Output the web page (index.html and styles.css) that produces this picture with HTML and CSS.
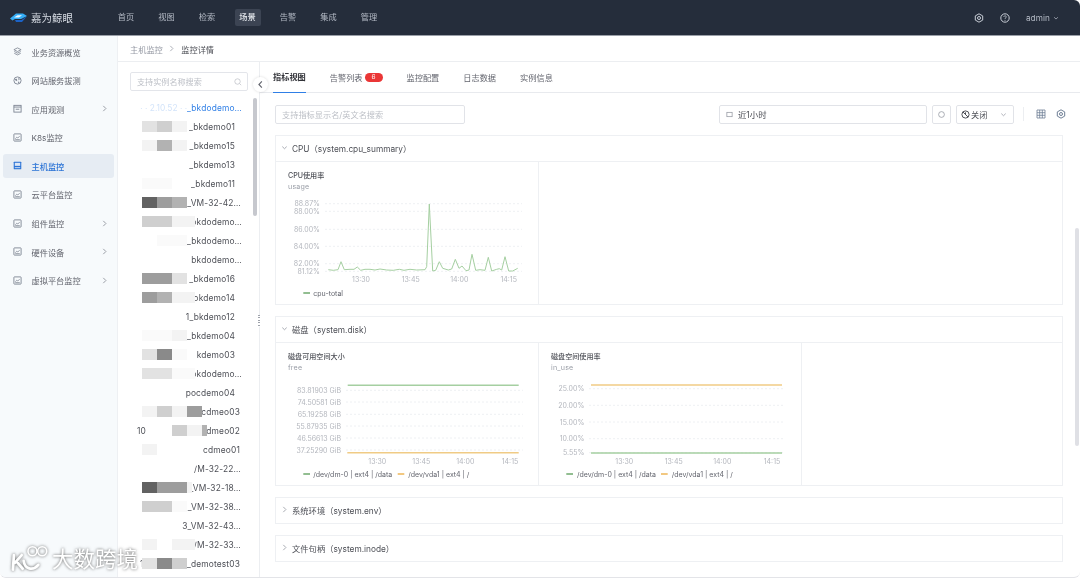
FILE: index.html
```html
<!DOCTYPE html>
<html lang="zh-CN">
<head>
<meta charset="utf-8">
<title>监控详情</title>
<link rel="stylesheet" href="styles.css">
</head>
<body>
<svg class="defs" width="0" height="0" aria-hidden="true">
  <symbol id="i-box" viewBox="0 0 10 10"><rect x="1" y="1" width="8" height="8" rx=".6" fill="none" stroke="currentColor"/><path d="M2.6 6.4 4.2 4.6 5.4 5.6 7.4 3.4" fill="none" stroke="currentColor" stroke-width=".8"/><path d="M2.5 7.4h5" stroke="currentColor" stroke-width=".9"/></symbol>
  <symbol id="i-gear" viewBox="0 0 10 10"><path d="M5 .8 8.7 2.9v4.2L5 9.2 1.3 7.1V2.9Z" fill="none" stroke="currentColor"/><circle cx="5" cy="5" r="1.5" fill="none" stroke="currentColor"/></symbol>
  <symbol id="i-down" viewBox="0 0 8 8"><path d="M1.5 3 4 5.4 6.5 3" fill="none" stroke="currentColor"/></symbol>
  <symbol id="i-right" viewBox="0 0 8 8"><path d="M2.6 1 5.6 4 2.6 7" fill="none" stroke="currentColor"/></symbol>
</svg>
<div class="app">
  <header class="top">
    <div class="brand">
      <svg class="logo" viewBox="0 0 17 10"><path d="M0 5.5 6 .5H13L17 3 11 6H5L2.5 7.5Z" fill="#35aef7"/><path d="M5 7H11.5L17 3.2 12 9H6Z" fill="#1b62c6"/><path d="M4 4.6 7.5 2.2H12L9 4.6Z" fill="#eaf6ff"/></svg>
      <span class="brand-name">嘉为鲸眼</span>
    </div>
    <nav class="nav">
      <a class="nav-item">首页</a><a class="nav-item">视图</a><a class="nav-item">检索</a><a class="nav-item on">场景</a><a class="nav-item">告警</a><a class="nav-item">集成</a><a class="nav-item">管理</a>
    </nav>
    <div class="top-right">
      <svg class="top-ic"><use href="#i-gear"/></svg>
      <svg class="top-ic" viewBox="0 0 10 10"><circle cx="5" cy="5" r="4.2" fill="none" stroke="currentColor"/><path d="M3.8 4c0-1.6 2.5-1.6 2.5-.1 0 1-1.3 1-1.3 2" fill="none" stroke="currentColor" stroke-width=".8"/><circle cx="5" cy="7.2" r=".5" fill="currentColor"/></svg>
      <span class="user">admin<svg class="user-caret"><use href="#i-down"/></svg></span>
    </div>
  </header>
  <div class="body">
    <aside class="side">
      <a class="side-item"><svg class="side-ic" viewBox="0 0 10 10"><path d="M5 1 9 3 5 5 1 3Z M1.4 5 5 6.8 8.6 5 M1.4 7 5 8.8 8.6 7" fill="none" stroke="currentColor" stroke-width=".9"/></svg>业务资源概览</a>
      <a class="side-item"><svg class="side-ic" viewBox="0 0 10 10"><circle cx="5" cy="5" r="4" fill="none" stroke="currentColor"/><path d="M2 3.4 4 3l.8 1.6-1.4 1.2ZM6 1.8l1.6 1.6L6.2 5ZM5.4 6.2l2 .4L6 8.4Z" fill="currentColor"/></svg>网站服务拔测</a>
      <a class="side-item"><svg class="side-ic" viewBox="0 0 10 10"><rect x="1" y="1.5" width="8" height="7.5" fill="none" stroke="currentColor"/><path d="M1 3.4h8M3 5.8h4" stroke="currentColor"/></svg>应用观测<svg class="side-arrow"><use href="#i-right"/></svg></a>
      <a class="side-item"><svg class="side-ic"><use href="#i-box"/></svg>K8s监控</a>
      <a class="side-item on"><svg class="side-ic" viewBox="0 0 10 10"><rect x=".8" y=".8" width="8.4" height="8.4" rx=".6" fill="currentColor"/><rect x="2" y="2" width="6" height="3.4" fill="#dbe6f5"/><path d="M2 7.4h6" stroke="#dbe6f5"/></svg>主机监控</a>
      <a class="side-item"><svg class="side-ic"><use href="#i-box"/></svg>云平台监控</a>
      <a class="side-item"><svg class="side-ic"><use href="#i-box"/></svg>组件监控<svg class="side-arrow"><use href="#i-right"/></svg></a>
      <a class="side-item"><svg class="side-ic"><use href="#i-box"/></svg>硬件设备<svg class="side-arrow"><use href="#i-right"/></svg></a>
      <a class="side-item"><svg class="side-ic"><use href="#i-box"/></svg>虚拟平台监控<svg class="side-arrow"><use href="#i-right"/></svg></a>
    </aside>
    <main class="main">
      <div class="crumb"><span class="crumb-link">主机监控</span><svg class="crumb-sep"><use href="#i-right"/></svg><span class="crumb-cur">监控详情</span></div>
      <div class="split">
        <section class="hosts">
          <div class="host-search"><span>支持实例名称搜索</span><svg class="search-ic" viewBox="0 0 10 10"><circle cx="4.4" cy="4.4" r="3.4" fill="none" stroke="currentColor" stroke-width=".8"/><path d="m7 7 2 2" stroke="currentColor" stroke-width=".8"/></svg></div>
          <div class="host-list">
            <div class="row e-long sel"><span class="ghost">· · 2.10.52 · ·</span>_bkdodemo…</div>
            <div class="row e-short"><div class="mask"><i class="m t2"></i><i class="m t3"></i><i class="m t1"></i></div>_bkdemo01</div>
            <div class="row e-short"><div class="mask"><i class="m t1"></i><i class="m t4"></i><i class="m t1"></i></div>_bkdemo15</div>
            <div class="row e-short">_bkdemo13</div>
            <div class="row e-short"><div class="mask"><i class="m xl t0"></i></div>_bkdemo11</div>
            <div class="row e-vm"><div class="mask"><i class="m t7"></i><i class="m t5"></i><i class="m t4"></i></div>_VM-32-42…</div>
            <div class="row e-long"><div class="mask"><i class="m t3"></i><i class="m t3"></i><i class="m l t1"></i></div>bkdodemo…</div>
            <div class="row e-long"><div class="mask"><i class="m"></i><i class="m xl t0"></i></div>_bkdodemo…</div>
            <div class="row e-long">bkdodemo…</div>
            <div class="row e-short"><div class="mask"><i class="m t5"></i><i class="m t5"></i><i class="m t2"></i></div>_bkdemo16</div>
            <div class="row e-short"><div class="mask"><i class="m t5"></i><i class="m t4"></i><i class="m l t1"></i></div>bkdemo14</div>
            <div class="row e-short">1_bkdemo12</div>
            <div class="row e-short"><div class="mask"><i class="m xl t0"></i><i class="m t1"></i></div>3_bkdemo04</div>
            <div class="row e-short"><div class="mask"><i class="m t2"></i><i class="m t6"></i><i class="m t0"></i></div>kdemo03</div>
            <div class="row e-long"><div class="mask"><i class="m t2"></i><i class="m t2"></i><i class="m l t0"></i></div>bkdodemo…</div>
            <div class="row e-short">pocdemo04</div>
            <div class="row e-mid"><div class="mask"><i class="m t1"></i><i class="m t3"></i><i class="m t1"></i><i class="m t5"></i></div>ocdmeo03</div>
            <div class="row e-mid"><span class="ip-start">10</span><div class="mask"><i class="m"></i><i class="m"></i><i class="m t3"></i><i class="m t1"></i><i class="m s t4"></i></div>dmeo02</div>
            <div class="row e-mid"><div class="mask"><i class="m t1"></i></div>cdmeo01</div>
            <div class="row e-vm">/M-32-22…</div>
            <div class="row e-vm"><div class="mask"><i class="m t7"></i><i class="m t5"></i><i class="m t5"></i><i class="m s t1"></i></div>_VM-32-18…</div>
            <div class="row e-vm"><div class="mask"><i class="m t3"></i><i class="m t3"></i><i class="m t0"></i></div>_VM-32-38…</div>
            <div class="row e-vm">3_VM-32-43…</div>
            <div class="row e-vm"><div class="mask"><i class="m t1"></i><i class="m"></i><i class="m l t1"></i></div>/M-32-33…</div>
            <div class="row e-mid"><span class="ip-start tail">1</span><div class="mask"><i class="m t2"></i><i class="m t6"></i><i class="m t3"></i></div>_demotest03</div>
          </div>
          <div class="host-thumb"></div>
          <button class="collapse"><svg viewBox="0 0 8 8"><path d="M5.2 1.2 2.6 4l2.6 2.8" fill="none" stroke="currentColor"/></svg></button>
          <div class="drag"></div>
        </section>
        <section class="detail">
          <div class="tabs">
            <a class="tab on">指标视图</a>
            <a class="tab">告警列表<b class="badge">6</b></a>
            <a class="tab">监控配置</a>
            <a class="tab">日志数据</a>
            <a class="tab">实例信息</a>
          </div>
          <div class="toolbar">
            <div class="field metric-search">支持指标显示名/英文名搜索</div>
            <div class="tools">
              <div class="field time"><svg class="cal" viewBox="0 0 8 8"><rect x="1" y="1.5" width="6" height="5" fill="none" stroke="currentColor" stroke-width=".8"/></svg>近1小时</div>
              <div class="field refresh"><svg viewBox="0 0 10 10"><circle cx="5" cy="5" r="3.2" fill="none" stroke="currentColor" stroke-width=".8"/></svg></div>
              <div class="field auto"><svg class="off" viewBox="0 0 10 10"><circle cx="5" cy="5" r="4" fill="none" stroke="currentColor" stroke-width="1.1"/><path d="m2.2 2.2 5.6 5.6M5 2.6V5" stroke="currentColor" stroke-width="1.1"/></svg>关闭<svg class="caret"><use href="#i-down"/></svg></div>
              <span class="tool-sep"></span>
              <svg class="tool-ic" viewBox="0 0 10 10"><path d="M1 1h8v8H1ZM1 3.7h8M1 6.3h8M3.7 1v8M6.3 1v8" fill="none" stroke="currentColor" stroke-width=".8"/></svg>
              <svg class="tool-ic"><use href="#i-gear"/></svg>
            </div>
          </div>

          <article class="card">
            <h3 class="card-head"><svg class="fold"><use href="#i-down"/></svg>CPU（system.cpu_summary）</h3>
            <div class="cells">
              <div class="cell">
                <h4 class="cell-title">CPU使用率</h4>
                <p class="cell-sub">usage</p>
                <svg class="chart" viewBox="276 192 262 112">
                  <g class="grid"><path d="M325 203.7H522M325 211.3H522M325 229.3H522M325 246.3H522M325 263.7H522M325 271.3H522"/></g>
                  <g class="ylab"><text x="320" y="203.7">88.87%</text><text x="320" y="211.3">88.00%</text><text x="320" y="229.3">86.00%</text><text x="320" y="246.3">84.00%</text><text x="320" y="263.7">82.00%</text><text x="320" y="271.3">81.12%</text></g>
                  <g class="xlab"><text x="361" y="279.7">13:30</text><text x="410.7" y="279.7">13:45</text><text x="459.3" y="279.7">14:00</text><text x="508.7" y="279.7">14:15</text></g>
                  <polyline class="line green" points="328.3,269.7 333.3,270.3 338,269.7 341,261.7 344.3,269.7 350,269.3 354,269.3 357.3,267 360.7,270.3 365,269.3 370,269.3 375,270 380,269 386.7,270 393.3,270.3 399.3,269.3 404,270.3 410,269.3 416.7,270 425,269.7 426.7,266.7 429.3,204 432.7,271 435.7,270.3 439.3,261.7 442.7,268.3 448.3,270 451.7,269 455.3,259.3 459,268.3 462,266 466,270.7 469,270 472,254.3 475.7,270.3 480,269.7 485,270.3 488.3,257.3 491.7,271 496.7,269.3 499.3,268.7 501.7,270 505,256.7 508.7,271 512.7,271 517.7,268.3"/>
                  <path class="swatch green-s" d="M303.3 293H310"/><text class="leg" x="313.3" y="293">cpu-total</text>
                </svg>
              </div>
            </div>
          </article>

          <article class="card">
            <h3 class="card-head"><svg class="fold"><use href="#i-down"/></svg>磁盘（system.disk）</h3>
            <div class="cells">
              <div class="cell">
                <h4 class="cell-title">磁盘可用空间大小</h4>
                <p class="cell-sub">free</p>
                <svg class="chart" viewBox="276 373 262 112">
                  <g class="grid"><path d="M346 390.3H523M346 402H523M346 414.3H523M346 426H523M346 438H523M346 450H523"/></g>
                  <g class="ylab"><text x="341" y="390.3">83.81903 GiB</text><text x="341" y="402">74.50581 GiB</text><text x="341" y="414.3">65.19258 GiB</text><text x="341" y="426">55.87935 GiB</text><text x="341" y="438">46.56613 GiB</text><text x="341" y="450">37.25290 GiB</text></g>
                  <g class="xlab"><text x="377.3" y="461">13:30</text><text x="421.3" y="461">13:45</text><text x="465.3" y="461">14:00</text><text x="510" y="461">14:15</text></g>
                  <path class="line wide green" d="M347.7 385.3H518.7"/>
                  <path class="line wide orange" d="M347.3 452.7H518.7"/>
                  <path class="swatch green-s" d="M303.3 474H310"/><text class="leg" x="313.3" y="474">/dev/dm-0 | ext4 | /data</text>
                  <path class="swatch orange-s" d="M397.7 474H404.3"/><text class="leg" x="408.3" y="474">/dev/vda1 | ext4 | /</text>
                </svg>
              </div>
              <div class="cell">
                <h4 class="cell-title">磁盘空间使用率</h4>
                <p class="cell-sub">in_use</p>
                <svg class="chart" viewBox="538 373 262 112">
                  <g class="grid"><path d="M588 388.7H783M588 405.3H783M588 422H783M588 438.7H783M588 452.7H783"/></g>
                  <g class="ylab"><text x="583.3" y="388.7">25.00%</text><text x="583.3" y="405.3">20.00%</text><text x="583.3" y="422">15.00%</text><text x="583.3" y="438.7">10.00%</text><text x="583.3" y="452.7">5.55%</text></g>
                  <g class="xlab"><text x="623.3" y="461">13:30</text><text x="672.7" y="461">13:45</text><text x="721.3" y="461">14:00</text><text x="771" y="461">14:15</text></g>
                  <path class="line wide orange" d="M590 385H781"/>
                  <path class="line wide green" d="M590 453H781"/>
                  <path class="swatch green-s" d="M565.3 474H572"/><text class="leg" x="576" y="474">/dev/dm-0 | ext4 | /data</text>
                  <path class="swatch orange-s" d="M660 474H666.7"/><text class="leg" x="670.7" y="474">/dev/vda1 | ext4 | /</text>
                </svg>
              </div>
            </div>
          </article>

          <article class="card"><h3 class="card-head"><svg class="fold"><use href="#i-right"/></svg>系统环境（system.env）</h3></article>
          <article class="card"><h3 class="card-head"><svg class="fold"><use href="#i-right"/></svg>文件句柄（system.inode）</h3></article>
          <div class="page-thumb"></div>
        </section>
      </div>
    </main>
  </div>
  <div class="watermark">
    <svg class="wm-logo" viewBox="0 0 42 28"><path d="M4 11 3 26M5 19 12 11M7 18 13 25M14 17c1 8 9 11 15 4" fill="none" stroke="#fff" stroke-width="2.8" stroke-linecap="round"/><circle cx="23" cy="7" r="4.6" fill="none" stroke="#fff" stroke-width="1.6"/><circle cx="33" cy="7" r="4.6" fill="none" stroke="#fff" stroke-width="1.6"/></svg>
    <span class="wm-text">大数跨境</span>
  </div>
</div>
</body>
</html>
```

FILE: styles.css
```css
* { box-sizing: border-box; }
html, body { margin: 0; height: 100%; background: #fff; overflow: hidden; }
body { font-family: Inter, "Noto Sans CJK SC", "Noto Sans", sans-serif; color: #63656e; font-size: 8.2px; }
.defs { position: absolute; }
h3, h4, p { margin: 0; font-weight: 400; }
.app { position: relative; height: 578px; border-bottom: 1px solid #e3e4e8; border-radius: 0 0 6px 6px; overflow: hidden; filter: blur(.4px); }

.top { height: 36px; background: #252d3b; border-bottom: 1px solid #9a9fa8; border-top-right-radius: 6px; display: flex; align-items: center; padding-left: 10px; color: #b4bac5; }
.brand { display: flex; align-items: center; width: 103px; }
.logo { width: 17px; height: 10px; margin-right: 4px; }
.brand-name { font-size: 10.5px; color: #d5dae2; letter-spacing: 0; }
.nav { display: flex; gap: 14.5px; }
.nav-item { width: 26px; height: 17px; line-height: 17px; text-align: center; border-radius: 2px; }
.nav-item.on { background: #3c4453; color: #e4e7ec; font-weight: 500; }
.top-right { margin-left: auto; display: flex; align-items: center; padding-right: 21px; color: #c8cdd6; }
.top-ic { width: 10px; height: 10px; margin-right: 16px; }
.user { display: flex; align-items: center; font-size: 8.2px; letter-spacing: .1px; margin-left: 0; color: #b4bac5; }
.user-caret { width: 6px; height: 6px; margin-left: 3px; }

.body { display: flex; height: 542px; }
.side { width: 118px; flex: none; background: #f7fafc; border-right: 1px solid #eef0f3; padding: 3.5px 3px 0; display: flex; flex-direction: column; gap: 4.6px; }
.side-item { height: 24px; display: flex; align-items: center; padding-left: 10px; border-radius: 3px; color: #63656e; }
.side-item.on { background: #e6ecf3; color: #2c74d6; font-weight: 500; }
.side-ic { width: 9px; height: 9px; margin-right: 9.5px; color: #7d8492; }
.side-item.on .side-ic { color: #2c74d6; }
.side-arrow { width: 7px; height: 7px; margin-left: auto; margin-right: 6px; color: #8b8f99; }

.main { flex: 1; min-width: 0; display: flex; flex-direction: column; }
.crumb { height: 26px; border-bottom: 1px solid #eceef1; display: flex; align-items: center; padding-left: 12px; }
.crumb-link { color: #979ba5; }
.crumb-sep { width: 7px; height: 7px; margin: 0 6px 0 5.5px; color: #a0a4ad; }
.crumb-cur { color: #4d4f56; }
.split { flex: 1; display: flex; min-height: 0; }

.hosts { position: relative; width: 142px; flex: none; border-right: 1px solid #eceef1; padding: 10px 0 0; }
.host-search { margin-left: 12px; width: 118px; height: 19px; border: 1px solid #e3e5ea; border-radius: 2px; display: flex; align-items: center; justify-content: space-between; padding: 0 5px 0 6px; color: #bcbfc6; font-size: 8.1px; }
.search-ic { width: 8px; height: 8px; color: #b4b7bf; }
.host-list { margin-top: 7px; font-size: 8.4px; letter-spacing: .15px; color: #4d4f56; }
.row { position: relative; height: 19px; display: flex; align-items: center; justify-content: flex-end; white-space: nowrap; }
.e-long { padding-right: 17px; }
.e-vm { padding-right: 18px; }
.e-mid { padding-right: 19px; }
.e-short { padding-right: 24px; }
.sel { color: #2f7fe6; }
.ghost { opacity: .22; letter-spacing: 0; }
.ip-start { position: absolute; left: 19px; }
.ip-start.tail { left: 22px; }
.mask { position: absolute; left: 24px; top: 4px; height: 11px; display: flex; }
.m { width: 15px; height: 100%; display: block; }
.m.s { width: 5px; }
.m.l { width: 23px; }
.m.xl { width: 30px; }
.t0 { background: #fafafa; }
.t1 { background: #f3f3f3; }
.t2 { background: #e2e2e2; }
.t3 { background: #cfcfcf; }
.t4 { background: #b2b2b2; }
.t5 { background: #9d9d9d; }
.t6 { background: #8a8a8a; }
.t7 { background: #626262; }
.host-thumb { position: absolute; left: 135px; top: 36px; width: 4px; height: 118px; border-radius: 2px; background: #c6c8ce; }
.collapse { position: absolute; right: -9px; top: 15px; width: 15px; height: 15px; padding: 3px; border: 0; border-radius: 50%; background: #fff; box-shadow: 0 0 3px rgba(0,0,0,.15); color: #63656e; display: flex; z-index: 2; }
.collapse svg { width: 9px; height: 9px; }
.drag { position: absolute; right: -1px; top: 253px; width: 2px; height: 12px; background: repeating-linear-gradient(#9ea2ab 0 1px, #fff 1px 2.4px); }

.detail { position: relative; flex: 1; min-width: 0; padding: 0 17px 0 15px; }
.tabs { height: 31px; margin: 0 -17px 0 -15px; padding-left: 13px; border-bottom: 1px solid #e8eaee; display: flex; gap: 24px; color: #63656e; }
.tab { height: 31px; line-height: 30px; display: flex; align-items: center; }
.tab.on { color: #313238; font-weight: 600; border-bottom: 1.5px solid #2f7fe6; }
.badge { margin-left: 2px; width: 18px; height: 9px; line-height: 9px; border-radius: 5px; background: #ea3636; color: #fff; font-weight: 400; font-size: 6.5px; text-align: center; }
.toolbar { display: flex; align-items: center; justify-content: space-between; margin: 11.5px 0; height: 19px; }
.field { height: 19px; border: 1px solid #e1e3e8; border-radius: 2px; display: flex; align-items: center; }
.metric-search { width: 190px; padding-left: 6px; color: #bcbfc6; }
.tools { display: flex; align-items: center; margin-right: -3px; }
.time { width: 208px; padding-left: 6px; color: #4d4f56; font-size: 8.4px; }
.cal { width: 7px; height: 7px; margin-right: 5px; color: #8d919b; }
.refresh { width: 19px; margin-left: 5px; justify-content: center; color: #8d919b; }
.refresh svg { width: 9px; height: 9px; }
.auto { width: 58px; margin-left: 5px; padding: 0 6px 0 4px; color: #4d4f56; }
.off { width: 9px; height: 9px; margin-right: 1px; color: #4d4f56; }
.caret { width: 7px; height: 7px; margin-left: auto; color: #a3a6af; }
.tool-sep { width: 1px; height: 14px; background: #eceef1; margin: 0 12px 0 9px; }
.tool-ic { width: 10px; height: 10px; color: #6f7f95; margin-right: 10px; }
.tool-ic:last-child { margin-right: 0; }

.card { border: 1px solid #eef0f3; margin-bottom: 11px; }
.card-head { height: 25px; display: flex; align-items: center; padding: 0 0 1.5px 5px; font-size: 8.3px; color: #4d4f56; }
.fold { width: 7px; height: 7px; margin-right: 4px; color: #9a9ea7; }
.cells { border-top: 1px solid #eef0f3; display: grid; grid-template-columns: repeat(3, 1fr); }
.cell { border-right: 1px solid #eef0f3; padding-top: 8px; height: 142px; }
.cell-title { height: 11px; line-height: 11px; padding-left: 12px; font-size: 7.1px; font-weight: 500; color: #4d4f56; }
.cell-sub { height: 11px; line-height: 11px; padding-left: 12px; font-size: 7.1px; color: #9a9ea7; letter-spacing: .2px; }
.chart { display: block; width: 262px; height: 112px; }
.chart text { font-family: Inter, sans-serif; font-size: 7px; dominant-baseline: central; fill: #b3b6bd; }
.ylab text { text-anchor: end; }
.xlab text { text-anchor: middle; }
.grid path { stroke: #eef0f3; stroke-width: 1; stroke-dasharray: 2 2; fill: none; }
.line { fill: none; stroke-width: 1; }
.line.wide { stroke-width: 1.4; }
.green { stroke: #a5cfa1; }
.orange { stroke: #f0cb85; }
.swatch { stroke-width: 1.5; fill: none; }
.green-s { stroke: #6ea86c; }
.orange-s { stroke: #eeb657; }
.chart .leg { fill: #63656e; font-size: 7px; }
.page-thumb { position: absolute; left: 815px; top: 166px; width: 4px; height: 218px; background: #dfe0e5; border-radius: 2px; }

.watermark { position: absolute; left: 10px; bottom: 5px; display: flex; align-items: center; filter: drop-shadow(0 0 1.5px rgba(70,70,70,.85)); z-index: 3; }
.wm-logo { width: 41px; height: 28px; }
.wm-text { margin-left: 1px; font-size: 21.5px; line-height: 26px; color: #fff; font-family: "Noto Sans CJK SC", sans-serif; font-weight: 400; }
```
